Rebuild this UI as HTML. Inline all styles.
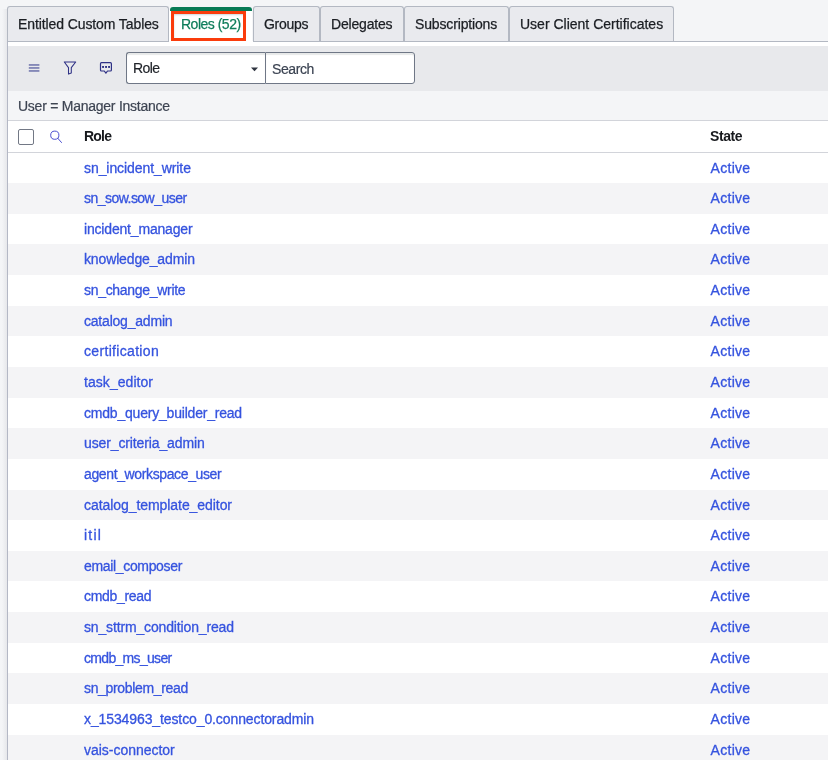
<!DOCTYPE html>
<html>
<head>
<meta charset="utf-8">
<style>
html,body{margin:0;padding:0;}
body{width:828px;height:760px;overflow:hidden;background:#f4f5f7;font-family:"Liberation Sans",sans-serif;font-size:14px;}
#root{position:absolute;left:0;top:0;width:828px;height:760px;overflow:hidden;background:#f4f5f7;will-change:transform;}
.abs{position:absolute;}
.frame{position:absolute;left:7px;top:41px;width:1px;height:720px;background:#b4b8c5;}
.shade{position:absolute;left:2px;top:9px;width:5px;height:760px;background:linear-gradient(to right,rgba(40,40,60,0),rgba(40,40,60,0.065));}
.tab{position:absolute;top:6px;height:35px;box-sizing:border-box;border:1px solid #b3b8c2;border-bottom:none;border-radius:3px 3px 0 0;background:#e9eaee;color:#1b1e23;}
.tab span{position:absolute;top:9px;white-space:nowrap;-webkit-text-stroke:0.25px currentColor;}
.tabline{position:absolute;left:7px;top:41px;width:830px;height:1px;background:#b3b8c2;}
.white{position:absolute;left:8px;top:42px;width:830px;height:4px;background:#fff;}
.toolbar{position:absolute;left:8px;top:46px;width:830px;height:45px;background:#e8e9ec;}
.crumb{position:absolute;left:8px;top:91px;width:830px;height:29px;background:#f4f5f7;}
.hl{position:absolute;left:8px;width:830px;height:1px;background:#d2d4da;}
.head{position:absolute;left:8px;top:121px;width:830px;height:31px;background:#fff;}
.row{position:absolute;left:8px;width:830px;height:30.63px;}
.r1{background:#fff;}
.r2{background:#f4f4f6;}
.row a{position:absolute;left:76px;top:7px;color:#3553df;text-decoration:none;white-space:nowrap;-webkit-text-stroke:0.3px currentColor;}
.row i{position:absolute;left:702.5px;top:7px;color:#3553df;font-style:normal;letter-spacing:0.3px;-webkit-text-stroke:0.3px currentColor;}
</style>
</head>
<body>
<div id="root">
<div class="shade"></div>
<div class="frame"></div>

<div class="tab" style="left:7px;width:162px;"><span style="left:10px;letter-spacing:-0.1px">Entitled Custom Tables</span></div>
<div class="tab" style="left:169px;top:7px;width:84px;height:35px;background:transparent;border:none;border-radius:0;">
  <div class="abs" style="left:0;top:3px;width:83px;height:31px;background:#fff;"></div>
  <div class="abs" style="left:1px;top:0;width:82px;height:4px;background:#077a55;border-radius:3px 3px 0 0;"></div>
  <div class="abs" style="left:2px;top:4px;width:69px;height:24px;border:3px solid #fa3c0c;box-shadow:inset 1px 2px 2px -1px rgba(110,135,150,0.35);"></div>
  <span style="left:12px;top:9px;color:#0f7d5b;letter-spacing:-0.5px">Roles (52)</span>
</div>
<div class="tab" style="left:253px;width:67px;"><span style="left:10px;letter-spacing:-0.3px">Groups</span></div>
<div class="tab" style="left:320px;width:84px;"><span style="left:10px;letter-spacing:-0.19px">Delegates</span></div>
<div class="tab" style="left:404px;width:105px;"><span style="left:10px;letter-spacing:-0.15px">Subscriptions</span></div>
<div class="tab" style="left:509px;width:165px;"><span style="left:10px;letter-spacing:0px">User Client Certificates</span></div>

<div class="tabline"></div>
<div class="abs" style="left:169px;top:41px;width:84px;height:1px;background:#fff"></div>
<div class="white"></div>
<div class="toolbar"></div>
<svg class="abs" style="left:0;top:0" width="828" height="100">
  <g fill="#7b7fb2">
    <rect x="28.8" y="64.1" width="10.6" height="1.7"/>
    <rect x="28.8" y="67.1" width="10.6" height="1.7"/>
    <rect x="28.8" y="70.1" width="10.6" height="1.7"/>
  </g>
  <path d="M64.3 62 H75.7 L71.3 67.6 V73.1 L68.5 74.1 V67.6 Z" fill="none" stroke="#2e3185" stroke-width="1.05" stroke-linejoin="round"/>
  <path d="M101.4 62.7 H110.4 Q111.4 62.7 111.4 63.7 V70 Q111.4 71 110.4 71 H107.5 L105.9 73.2 L104.3 71 H101.4 Q100.5 71 100.5 70 V63.7 Q100.5 62.7 101.4 62.7 Z" fill="none" stroke="#2e3185" stroke-width="1.2" stroke-linejoin="round"/>
  <g fill="#2e3185">
    <rect x="102.1" y="66" width="1.9" height="1.9"/>
    <rect x="105.1" y="66" width="1.9" height="1.9"/>
    <rect x="108.1" y="66" width="1.9" height="1.9"/>
  </g>
</svg>
<div class="abs" style="left:126px;top:52px;width:139px;height:32px;box-sizing:border-box;border:1px solid #6f7786;border-right:none;border-radius:3px 0 0 3px;background:#fff;box-shadow:inset 0 2px 1px #e7e9e9;"></div>
<div class="abs" style="left:265px;top:52px;width:150px;height:32px;box-sizing:border-box;border:1px solid #6f7786;border-radius:0 3px 3px 0;background:#fff;box-shadow:inset 0 2px 1px #e7e9e9;"></div>
<span class="abs" style="left:133px;top:60px;color:#1f2228;letter-spacing:-0.6px;-webkit-text-stroke:0.2px currentColor">Role</span>
<svg class="abs" style="left:250px;top:66px" width="9" height="7"><path d="M1 1.6 H8 L4.5 5.2 Z" fill="#2f3440"/></svg>
<span class="abs" style="left:272px;top:61px;color:#3b4352;letter-spacing:-0.4px;-webkit-text-stroke:0.2px currentColor">Search</span>

<div class="crumb"><span class="abs" style="left:10px;top:7px;color:#3d4452;letter-spacing:-0.25px;-webkit-text-stroke:0.2px currentColor">User = Manager Instance</span></div>
<div class="hl" style="top:120px"></div>
<div class="head">
  <div class="abs" style="left:10px;top:8px;width:16px;height:16px;box-sizing:border-box;border:1.2px solid #727885;border-radius:2px;"></div>
  <svg class="abs" style="left:38px;top:6px" width="20" height="20"><circle cx="8.8" cy="8.2" r="4.1" fill="none" stroke="#4b4fd0" stroke-width="1"/><path d="M11.7 11.2 L15.5 15.5" stroke="#4b4fd0" stroke-width="1" stroke-linecap="round"/></svg>
  <span class="abs" style="left:76px;top:7px;font-weight:bold;color:#17191d;letter-spacing:-0.8px">Role</span>
  <span class="abs" style="left:702px;top:7px;font-weight:bold;color:#17191d;letter-spacing:-0.4px">State</span>
</div>
<div class="hl" style="top:152px"></div>
<div class="row r1" style="top:152.60px"><a style="letter-spacing:-0.075px">sn_incident_write</a><i>Active</i></div>
<div class="row r2" style="top:183.23px"><a style="letter-spacing:-0.529px">sn_sow.sow_user</a><i>Active</i></div>
<div class="row r1" style="top:213.86px"><a style="letter-spacing:-0.18px">incident_manager</a><i>Active</i></div>
<div class="row r2" style="top:244.49px"><a style="letter-spacing:-0.136px">knowledge_admin</a><i>Active</i></div>
<div class="row r1" style="top:275.12px"><a style="letter-spacing:-0.3px">sn_change_write</a><i>Active</i></div>
<div class="row r2" style="top:305.75px"><a style="letter-spacing:-0.208px">catalog_admin</a><i>Active</i></div>
<div class="row r1" style="top:336.38px"><a style="letter-spacing:0.325px">certification</a><i>Active</i></div>
<div class="row r2" style="top:367.01px"><a style="letter-spacing:0.05px">task_editor</a><i>Active</i></div>
<div class="row r1" style="top:397.64px"><a style="letter-spacing:-0.205px">cmdb_query_builder_read</a><i>Active</i></div>
<div class="row r2" style="top:428.27px"><a style="letter-spacing:-0.122px">user_criteria_admin</a><i>Active</i></div>
<div class="row r1" style="top:458.90px"><a style="letter-spacing:-0.374px">agent_workspace_user</a><i>Active</i></div>
<div class="row r2" style="top:489.53px"><a style="letter-spacing:-0.064px">catalog_template_editor</a><i>Active</i></div>
<div class="row r1" style="top:520.16px"><a style="letter-spacing:1.2px">itil</a><i>Active</i></div>
<div class="row r2" style="top:550.79px"><a style="letter-spacing:-0.338px">email_composer</a><i>Active</i></div>
<div class="row r1" style="top:581.42px"><a style="letter-spacing:-0.325px">cmdb_read</a><i>Active</i></div>
<div class="row r2" style="top:612.05px"><a style="letter-spacing:-0.15px">sn_sttrm_condition_read</a><i>Active</i></div>
<div class="row r1" style="top:642.68px"><a style="letter-spacing:-0.682px">cmdb_ms_user</a><i>Active</i></div>
<div class="row r2" style="top:673.31px"><a style="letter-spacing:-0.336px">sn_problem_read</a><i>Active</i></div>
<div class="row r1" style="top:703.94px"><a style="letter-spacing:-0.106px">x_1534963_testco_0.connectoradmin</a><i>Active</i></div>
<div class="row r2" style="top:734.57px"><a style="letter-spacing:-0.023px">vais-connector</a><i>Active</i></div>
</div>
</body>
</html>
